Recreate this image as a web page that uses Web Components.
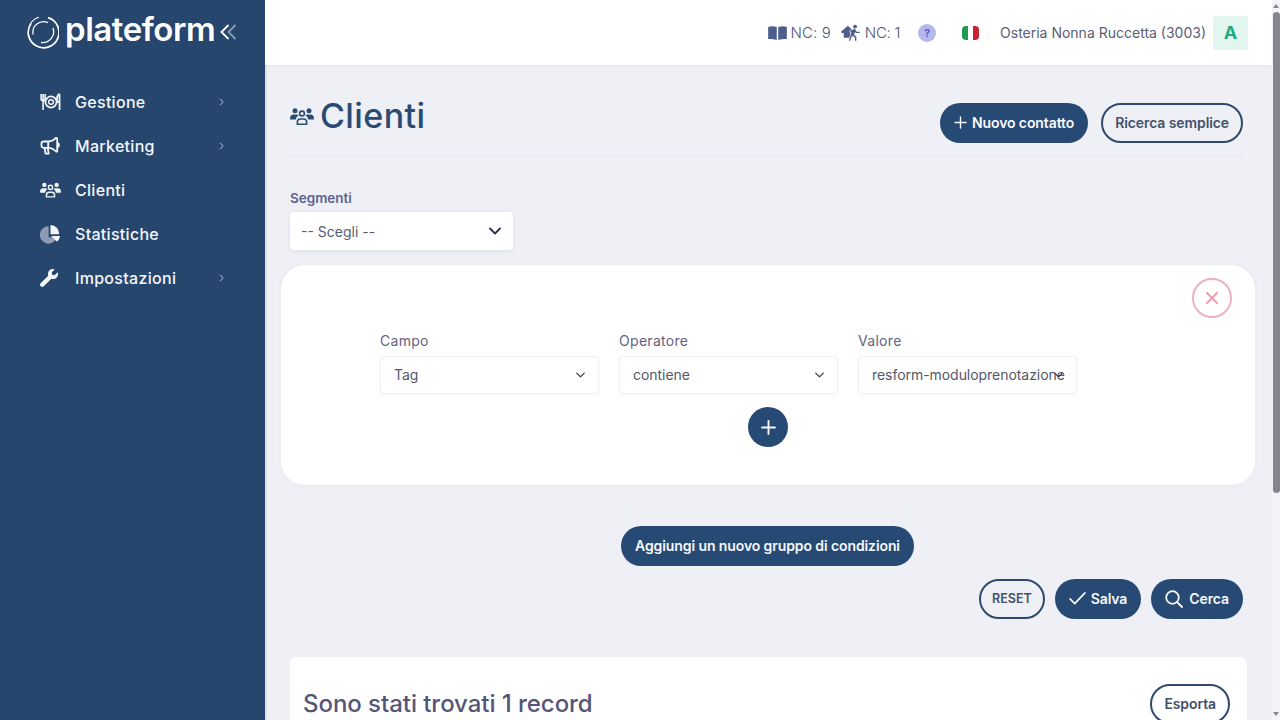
<!DOCTYPE html>
<html lang="it">
<head>
<meta charset="utf-8">
<title>Clienti</title>
<style>
  html, body { margin: 0; height: 720px; overflow: hidden; background: #eef0f6; }
  body { font-family: Inter, "Noto Sans", sans-serif; color: #4a4a68; }
</style>
</head>
<body>
<pf-shell>
  <pf-sidebar slot="side">
    <pf-nav-item icon="plate" arrow>Gestione</pf-nav-item>
    <pf-nav-item icon="bullhorn" arrow>Marketing</pf-nav-item>
    <pf-nav-item icon="users">Clienti</pf-nav-item>
    <pf-nav-item icon="pie">Statistiche</pf-nav-item>
    <pf-nav-item icon="wrench" arrow>Impostazioni</pf-nav-item>
  </pf-sidebar>
  <pf-topbar slot="top"></pf-topbar>
  <pf-page-head>
    <pf-button variant="solid" icon="plus">Nuovo contatto</pf-button>
    <pf-button variant="outline">Ricerca semplice</pf-button>
  </pf-page-head>
  <pf-segment></pf-segment>
  <pf-filter-card>
    <pf-field label="Campo" value="Tag"></pf-field>
    <pf-field label="Operatore" value="contiene"></pf-field>
    <pf-field label="Valore" value="resform-moduloprenotazione"></pf-field>
  </pf-filter-card>
  <pf-actions>
    <pf-button slot="center" variant="solid">Aggiungi un nuovo gruppo di condizioni</pf-button>
    <pf-button variant="outline" tight>RESET</pf-button>
    <pf-button variant="solid" icon="check">Salva</pf-button>
    <pf-button variant="solid" icon="search" wide>Cerca</pf-button>
  </pf-actions>
  <pf-results>Sono stati trovati 1 record</pf-results>
</pf-shell>

<script>
// icon set, all drawn with currentColor
const ICONS = {
  plate: `<svg viewBox="0 0 24 20" width="22" height="18" fill="none" stroke="currentColor" stroke-width="2">
    <circle cx="12" cy="10" r="6.2"/><circle cx="12" cy="10" r="2.6" stroke-width="1.6"/>
    <path d="M1 1v5.5q0 2 2 2h.5q2 0 2-2V1M3.2 1v18" stroke-width="1.8"/>
    <path d="M21.5 1v18M21.5 1q-2.8 1.5-2.8 5v4h2.8" stroke-width="2"/></svg>`,
  bullhorn: `<svg viewBox="0 0 22 20" width="20" height="18" fill="none" stroke="currentColor" stroke-width="2" stroke-linejoin="round">
    <path d="M19 2v14l-1 .4Q14 12 9 12H4q-2.500-.2-2.500-2.500v-2Q1.500 5 4 5h5q5 0 9-4.500z"/>
    <path d="M5 12.500l1 6h3.500l-1-6M9 5v7M19 6.500q2 .5 2 2.500t-2 2.500"/></svg>`,
  users: `<svg viewBox="0 0 24 18" width="VARW" height="VARH" fill="currentColor">
    <circle cx="5" cy="3.200" r="2.500"/><circle cx="19" cy="3.200" r="2.500"/>
    <circle cx="12" cy="6" r="2.400" fill="none" stroke="currentColor" stroke-width="1.600"/>
    <path d="M0 11.500Q0 7.200 3.500 7h3q1.200 0 2 .8-2.300 1.500-2.700 4.200H.8Q0 12 0 11.500zM24 11.500Q24 7.200 20.500 7h-3q-1.200 0-2 .8 2.300 1.500 2.700 4.200h5q.8 0 .8-.5z"/>
    <path d="M7.300 16.800v-1.600q0-3.700 3-3.700h3.400q3 0 3 3.700v1.600z" fill="none" stroke="currentColor" stroke-width="1.600" stroke-linejoin="round"/></svg>`,
  pie: `<svg viewBox="0 0 22 20" width="21" height="19">
    <path d="M9 1.200A9.200 9.200 0 1 0 17.800 13H9z" fill="#8d9cb6"/>
    <path d="M11 0a9 9 0 0 1 9 9.800h-9z" fill="currentColor"/>
    <path d="M11.500 11.500H21a9 9 0 0 1-3 6z" fill="currentColor"/></svg>`,
  wrench: `<svg viewBox="0 0 512 512" width="18" height="18" fill="currentColor"><path d="M507.730 109.100c-2.240-9.030-13.540-12.090-20.120-5.510l-74.360 74.360-67.880-11.310-11.310-67.880 74.360-74.360c6.620-6.620 3.430-17.900-5.660-20.160-47.380-11.740-99.550.91-136.580 37.930-39.640 39.640-50.550 97.100-34.050 147.200L18.740 402.760c-24.990 24.990-24.990 65.510 0 90.500 24.990 24.990 65.510 24.990 90.500 0l213.210-213.210c50.120 16.710 107.470 5.680 147.370-34.220 37.070-37.070 49.700-89.320 37.910-136.730z"/></svg>`,
  plus: `<svg viewBox="0 0 14 14" width="13" height="13" fill="none" stroke="currentColor" stroke-width="1.500" stroke-linecap="round"><path d="M7 1v12M1 7h12"/></svg>`,
  check: `<svg viewBox="0 0 18 14" width="17" height="13" fill="none" stroke="currentColor" stroke-width="1.800" stroke-linecap="round" stroke-linejoin="round"><path d="M1 7.500l5 5L17 1"/></svg>`,
  search: `<svg viewBox="0 0 18 18" width="18" height="18" fill="none" stroke="currentColor" stroke-width="1.800" stroke-linecap="round"><circle cx="7.500" cy="7.500" r="6.300"/><path d="M12.200 12.200l4.800 4.800"/></svg>`,
  chevron: `<svg viewBox="0 0 12 8" width="9" height="6" fill="none" stroke="currentColor" stroke-width="1.800" stroke-linecap="round" stroke-linejoin="round"><path d="M1 1.500l5 5 5-5"/></svg>`,
  book: `<svg viewBox="0 0 20 15" width="19" height="14" fill="currentColor"><path d="M0 1Q4-.3 9.200 1v14Q5 13.700 0 14zM20 1q-4-1.300-9.200 0v14q4.200-1.300 9.200-1z"/></svg>`,
  runner: `<svg viewBox="0 0 22 18" width="20" height="17" fill="currentColor">
    <path d="M0 8.300L7.500 1.500 14 7.500l-1.500 1.200v6H3V9.200L1.200 10z"/>
    <path d="M11.300 6.500l4-1.500 1.800 3.300h3.400v1.300h-4.200l-.8-1.400-1.200 3.200 2.600 2.300V18h-1.500v-3.500l-3.300-2.300-1.900 5.800H8.600l3-9.500-1.100.5-.6-1.300z" stroke="#fff" stroke-width="1.300" paint-order="stroke"/>
    <circle cx="15.500" cy="2.500" r="2.100"/></svg>`
};

function icon(name, w, h) {
  return ICONS[name].replace('VARW', w || 22).replace('VARH', h || 17);
}

class PfShell extends HTMLElement {
  constructor() {
    super();
    this.attachShadow({ mode: 'open' });
    this.shadowRoot.innerHTML = `
      <style>
        :host { display: grid; grid-template-columns: 265px 1fr 8px; grid-template-rows: 65px 655px; height: 720px; overflow: hidden; }
        .side { grid-row: 1 / 3; display: block; }
        .main { grid-column: 2; grid-row: 2; overflow: hidden; padding: 38px 7px 0 0; box-sizing: border-box; }
        .track { grid-column: 3; grid-row: 1 / 3; background: #f3f4f7; display: flex; flex-direction: column; align-items: center; position: relative; }
        .thumb { width: 7px; height: 481px; margin-top: 12px; background: #85858f; border-radius: 4px; }
        .up, .down { position: absolute; width: 0; height: 0; border-left: 3.500px solid transparent; border-right: 3.500px solid transparent; }
        .up { top: 4px; border-bottom: 4px solid #85858f; }
        .down { bottom: 4px; border-top: 4px solid #85858f; }
      </style>
      <div class="side"><slot name="side"></slot></div>
      <slot name="top"></slot>
      <div class="main"><slot></slot></div>
      <div class="track"><i class="up"></i><div class="thumb"></div><i class="down"></i></div>`;
  }
}

class PfSidebar extends HTMLElement {
  constructor() {
    super();
    this.attachShadow({ mode: 'open' });
    this.shadowRoot.innerHTML = `
      <style>
        :host { display: block; height: 720px; background: #26466e; color: #fff; box-shadow: 1px 0 2px rgba(0,0,0,.12); position: relative; }
        .brand { display: flex; align-items: center; height: 64px; padding-left: 26px; }
        .word { font-size: 33px; font-weight: 600; letter-spacing: -.45px; margin-left: 6px; line-height: 1; padding-bottom: 6px; }
        .collapse { margin-left: 5px; display: flex; }
        nav { display: flex; flex-direction: column; margin-top: 16px; }
      </style>
      <div class="brand">
        <svg width="33" height="34" viewBox="0 0 33 34" fill="none" stroke="#fff">
          <path d="M5 8.500A15.400 15.400 0 1 0 22 2.600" stroke-width="1.700"/>
          <path d="M6.500 19A10.800 10.800 0 0 1 21.500 7.200" stroke-width="1.300" transform="translate(.5 .5)"/>
          <path d="M13 2.200Q7 3.800 4 9.500" stroke-width="1.100"/>
          <path d="M27 13a11 11 0 0 1-12 14.500" stroke-width="1.300"/>
        </svg>
        <span class="word">plateform</span>
        <span class="collapse">
          <svg width="17" height="16" viewBox="0 0 17 16" fill="none" stroke-width="1.800">
            <path d="M8.500 1L1.500 8l7 7" stroke="#fff"/><path d="M15.500 1L8.500 8l7 7" stroke="#8d9cb6"/>
          </svg>
        </span>
      </div>
      <nav><slot></slot></nav>`;
  }
}

class PfNavItem extends HTMLElement {
  constructor() {
    super();
    this.attachShadow({ mode: 'open' });
  }
  connectedCallback() {
    this.shadowRoot.innerHTML = `
      <style>
        :host { display: flex; align-items: center; height: 44px; padding-left: 40px; color: #f4f6fa; font-size: 16px; font-weight: 500; letter-spacing: .3px; }
        .ic { width: 35px; flex: none; display: flex; align-items: center; }
        .label { flex: 1; }
        .arrow { width: 46px; flex: none; color: #b4c0d2; display: flex; }
      </style>
      <span class="ic">${icon(this.getAttribute('icon'), 21, 16)}</span>
      <span class="label"><slot></slot></span>
      ${this.hasAttribute('arrow') ? `<span class="arrow"><svg width="5" height="8" viewBox="0 0 5 8" fill="none" stroke="currentColor" stroke-width="1"><path d="M1 .8L4.200 4 1 7.200"/></svg></span>` : ''}`;
  }
}

class PfTopbar extends HTMLElement {
  constructor() {
    super();
    this.attachShadow({ mode: 'open' });
    this.shadowRoot.innerHTML = `
      <style>
        :host { display: flex; align-items: center; justify-content: flex-end; height: 65px; background: #fff; padding-right: 24px; box-shadow: 0 1px 6px rgba(90,90,130,.05); font-size: 14px; color: #5d5d76; position: relative; z-index: 1; }
        .nc { display: flex; align-items: center; gap: 4px; font-size: 15px; font-weight: 300; letter-spacing: .1px; color: #4f5478; }
        .nc svg { color: #4f5d8c; display: block; }
        .help { width: 18px; height: 18px; border-radius: 50%; background: #b4b8ea; color: #5a5fd0; font-size: 11px; font-weight: 700; display: flex; align-items: center; justify-content: center; margin-left: 18px; }
        .flag { width: 17px; height: 14px; margin-left: 26px; border-radius: 4px; display: flex; overflow: hidden; }
        .flag i { flex: 1; }
        .name { margin-left: 21px; }
        .avatar { width: 35px; height: 34px; margin-left: 7px; background: #e3f5ef; color: #1dab80; font-size: 18px; font-weight: 700; display: flex; align-items: center; justify-content: center; border-radius: 3px; }
      </style>
      <span class="nc">${icon('book')}<span>NC: 9</span></span>
      <span class="nc" style="margin-left:10px">${icon('runner')}<span style="letter-spacing:-.3px">NC: 1</span></span>
      <span class="help">?</span>
      <span class="flag"><i style="background:#1f9a55"></i><i style="background:#fff"></i><i style="background:#c9232f"></i></span>
      <span class="name">Osteria Nonna Ruccetta (3003)</span>
      <span class="avatar">A</span>`;
  }
}

class PfButton extends HTMLElement {
  constructor() {
    super();
    this.attachShadow({ mode: 'open' });
  }
  connectedCallback() {
    const name = this.getAttribute('icon');
    this.shadowRoot.innerHTML = `
      <style>
        :host { display: inline-flex; align-items: center; justify-content: center; gap: 5px; height: 40px; box-sizing: border-box; padding: 0 14px 1px; border-radius: 20px; font-size: 14px; font-weight: 600; letter-spacing: -.1px; white-space: nowrap; }
        :host([variant="solid"]) { background: #274a75; color: #f6f8fb; }
        :host([variant="outline"]) { border: 2px solid #2f4a6c; color: #44506a; background: transparent; padding: 0 12px 1px; }
        :host([tight]) { font-size: 12.500px; padding: 0 11px 1px !important; letter-spacing: 0; }
        :host([wide]) { gap: 6px; }
        svg { display: block; }
      </style>
      ${name ? icon(name) : ''}<slot></slot>`;
  }
}

class PfPageHead extends HTMLElement {
  constructor() {
    super();
    this.attachShadow({ mode: 'open' });
    this.shadowRoot.innerHTML = `
      <style>
        :host { display: flex; justify-content: space-between; margin: 0 22px 0 25px; height: 52px; border-bottom: 2px solid #eaebf2; color: #2c4b73; }
        h1 { margin: -5px 0 0; display: flex; align-items: flex-start; gap: 6px; font-size: 34px; line-height: 36px; font-weight: 500; letter-spacing: .4px; }
        h1 svg { margin-top: 9px; }
        .btns { display: flex; gap: 13px; }
      </style>
      <h1>${icon('users', 24, 19)}<span>Clienti</span></h1>
      <div class="btns"><slot></slot></div>`;
  }
}

class PfSegment extends HTMLElement {
  constructor() {
    super();
    this.attachShadow({ mode: 'open' });
    this.shadowRoot.innerHTML = `
      <style>
        :host { display: block; margin: 31px 0 0 25px; }
        label { display: block; font-size: 13.500px; line-height: 20px; font-weight: 600; color: #62628f; margin-bottom: 4px; }
        .box { width: 223px; height: 38px; box-sizing: border-box; background: #fff; border-radius: 3px; box-shadow: 0 1px 4px rgba(60,60,100,.1); display: flex; align-items: center; justify-content: space-between; padding: 0 12px 0 11px; font-size: 14px; color: #5a5d70; }
        svg { color: #2b3342; width: 12px; height: 8px; }
      </style>
      <label>Segmenti</label>
      <div class="box"><span>-- Scegli --</span>${ICONS.chevron}</div>`;
  }
}

class PfField extends HTMLElement {
  constructor() {
    super();
    this.attachShadow({ mode: 'open' });
  }
  connectedCallback() {
    this.shadowRoot.innerHTML = `
      <style>
        :host { display: block; width: 219px; }
        label { display: block; font-size: 14px; line-height: 20px; color: #62627f; margin-bottom: 5px; letter-spacing: .3px; }
        .box { position: relative; height: 38px; box-sizing: border-box; background: #fff; border: 1px solid #eef0f4; border-radius: 3px; box-shadow: 0 1px 2px rgba(60,60,100,.04); display: flex; align-items: center; padding: 0 0 2px 13px; font-size: 14px; letter-spacing: -.05px; color: #55586a; white-space: nowrap; overflow: hidden; }
        svg { position: absolute; right: 13px; top: 15px; color: #3a4150; }
      </style>
      <label>${this.getAttribute('label')}</label>
      <div class="box"><span>${this.getAttribute('value')}</span>${ICONS.chevron}</div>`;
  }
}

class PfFilterCard extends HTMLElement {
  constructor() {
    super();
    this.attachShadow({ mode: 'open' });
    this.shadowRoot.innerHTML = `
      <style>
        :host { display: block; position: relative; margin: 15px 10px 0 16px; height: 220px; box-sizing: border-box; background: #fff; border-radius: 24px; box-shadow: 0 0 4px rgba(90,90,130,.05); padding-top: 66px; }
        .row { display: flex; gap: 20px; padding-left: 99px; }
        .close { position: absolute; top: 13px; right: 23px; width: 40px; height: 40px; box-sizing: border-box; border: 2px solid #eeb1c0; border-radius: 50%; display: flex; align-items: center; justify-content: center; }
        .add { width: 40px; height: 40px; border-radius: 50%; background: #274a75; color: #f4f7fb; display: flex; align-items: center; justify-content: center; margin: 13px auto 0; }
        .add svg { width: 15px; height: 15px; stroke-width: 1.800; }
      </style>
      <span class="close"><svg width="12" height="12" viewBox="0 0 12 12" fill="none" stroke="#ee9bb0" stroke-width="2" stroke-linecap="round"><path d="M1 1l10 10M11 1L1 11"/></svg></span>
      <div class="row"><slot></slot></div>
      <div class="add">${ICONS.plus}</div>`;
  }
}

class PfActions extends HTMLElement {
  constructor() {
    super();
    this.attachShadow({ mode: 'open' });
    this.shadowRoot.innerHTML = `
      <style>
        :host { display: block; margin-right: 22px; }
        .center { display: flex; justify-content: center; margin: 41px 0 13px 27px; }
        .right { display: flex; justify-content: flex-end; gap: 10px; }
      </style>
      <div class="center"><slot name="center"></slot></div>
      <div class="right"><slot></slot></div>`;
  }
}

class PfResults extends HTMLElement {
  constructor() {
    super();
    this.attachShadow({ mode: 'open' });
    this.shadowRoot.innerHTML = `
      <style>
        :host { display: flex; align-items: flex-start; justify-content: space-between; margin: 38px 18px 0 25px; height: 120px; box-sizing: border-box; background: #fff; border-radius: 6px; padding: 27px 17px 0 13px; }
        h2 { margin: 1px 0 0; font-size: 24px; line-height: 38px; font-weight: 500; color: #55557a; letter-spacing: -.05px; }
      </style>
      <h2><slot></slot></h2>
      <pf-button variant="outline">Esporta</pf-button>`;
  }
}

customElements.define('pf-button', PfButton);
customElements.define('pf-shell', PfShell);
customElements.define('pf-sidebar', PfSidebar);
customElements.define('pf-nav-item', PfNavItem);
customElements.define('pf-topbar', PfTopbar);
customElements.define('pf-page-head', PfPageHead);
customElements.define('pf-segment', PfSegment);
customElements.define('pf-field', PfField);
customElements.define('pf-filter-card', PfFilterCard);
customElements.define('pf-actions', PfActions);
customElements.define('pf-results', PfResults);
</script>
</body>
</html>
